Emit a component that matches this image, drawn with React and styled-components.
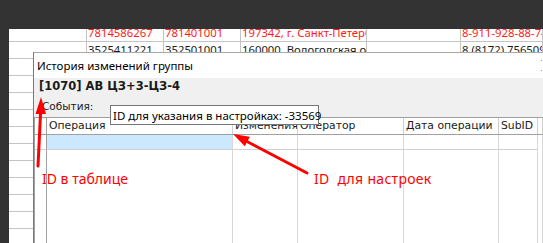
import styled, { createGlobalStyle } from "styled-components";

const GlobalStyle = createGlobalStyle`
  html, body {
    margin: 0;
    padding: 0;
    background: #333333;
  }
`;

const Screen = styled.div`
  position: relative;
  width: 543px;
  height: 243px;
  overflow: hidden;
  background: #333333;
  display: flex;
  flex-direction: column;
`;

const TopBand = styled.div`
  height: 29px;
  flex-shrink: 0;
`;

const SheetArea = styled.div`
  flex: 1;
  display: flex;
  padding-left: 9px;
  overflow: hidden;
`;

const Sheet = styled.div`
  flex: 1;
  background: #ffffff;
  overflow: hidden;
`;

const SheetRows = styled.div`
  margin-top: -4px;
  display: flex;
  flex-direction: column;
`;

const SheetRow = styled.div`
  display: grid;
  grid-template-columns: 78px 77px 77px 126px 94px 1fr;
  height: 16px;
  border-bottom: 1px solid #c4c4c4;
`;

const SheetCell = styled.div`
  border-right: 1px solid #c4c4c4;
  padding-left: 1px;
  font-family: "Noto Sans", sans-serif;
  font-size: 11.3px;
  line-height: 16px;
  color: ${(p) => (p.$red ? "#ff1a1a" : "#1a1a1a")};
  white-space: nowrap;
  overflow: hidden;
`;

const Dialog = styled.div`
  position: absolute;
  left: 33px;
  top: 52px;
  right: 0;
  bottom: -20px;
  border-left: 1px solid #7a7a7a;
  border-top: 1px solid #a8a8a8;
  display: flex;
  flex-direction: column;
  background: #f0f0f0;
`;

const TitleBar = styled.div`
  height: 25px;
  flex-shrink: 0;
  background: #ffffff;
  display: flex;
  align-items: center;
  justify-content: space-between;
  padding-left: 3px;
  padding-right: 1px;
  font-family: "Noto Sans", sans-serif;
  font-size: 11.5px;
  color: #000000;
`;

const ControlMark = styled.span`
  width: 1px;
  height: 9px;
  border-top: 1px solid #a0a0a0;
  border-bottom: 1px solid #a0a0a0;
`;

const Body = styled.div`
  flex: 1;
  display: flex;
  flex-direction: column;
  padding-top: 1px;
`;

const GroupName = styled.div`
  padding-left: 5px;
  font-family: "DejaVu Sans", sans-serif;
  font-weight: bold;
  font-size: 11.5px;
  line-height: 15px;
  color: #1a1a1a;
`;

const SectionLabel = styled.div`
  margin-top: 5px;
  padding-left: 8px;
  font-family: "DejaVu Sans", sans-serif;
  font-size: 10.5px;
  line-height: 14px;
  color: #1a1a1a;
`;

const Grid = styled.div`
  margin-top: 4px;
  flex: 1;
  background: #ffffff;
  border-left: 1px solid #a0a0a0;
  border-top: 1px solid #a0a0a0;
  display: flex;
  flex-direction: column;
`;

const GridRow = styled.div`
  display: grid;
  grid-template-columns: 12px 186px 65px 106px 95px 39px 1fr;
  height: ${(p) => p.$height};
  flex: ${(p) => (p.$fill ? 1 : "none")};
  border-bottom: ${(p) => p.$line};
`;

const HeadCell = styled.div`
  border-right: 1px solid ${(p) => (p.$rowHead ? "#a0a0a0" : "#d0d0d0")};
  padding-left: 2px;
  font-family: "DejaVu Sans", sans-serif;
  font-size: 10.8px;
  line-height: 16px;
  color: #1a1a1a;
  white-space: nowrap;
  overflow: hidden;
`;

const Cell = styled.div`
  border-right: 1px solid ${(p) => (p.$rowHead ? "#a0a0a0" : "#d8d8d8")};
  border-bottom: ${(p) => (p.$bottom ? "1px solid #d0d0d0" : "none")};
  background: ${(p) => (p.$selected ? "#cce8ff" : "#ffffff")};
`;

const Tooltip = styled.div`
  position: absolute;
  left: 110px;
  top: 105px;
  width: 205px;
  height: 18px;
  background: #ffffff;
  border: 1px solid #767676;
  padding-left: 2px;
  font-family: "Noto Sans", sans-serif;
  font-size: 11.5px;
  line-height: 19px;
  color: #000000;
  white-space: nowrap;
`;

const Arrows = styled.svg`
  position: absolute;
  left: 0;
  top: 0;
  pointer-events: none;
`;

const Note = styled.div`
  position: absolute;
  left: ${(p) => p.$x}px;
  top: ${(p) => p.$y}px;
  font-family: "Noto Sans", sans-serif;
  font-size: 14px;
  line-height: 18px;
  letter-spacing: ${(p) => p.$spacing || "0"};
  color: #ff0000;
  white-space: pre;
`;

const sheetData = [
  {
    red: true,
    cells: ["", "7814586267", "781401001", "197342, г. Санкт-Петербург", "", "8-911-928-88-74"],
  },
  {
    red: false,
    cells: ["", "3525411221", "352501001", "160000, Вологодская область", "", "8 (8172) 756509"],
  },
];

const columns = ["", "Операция", "Изменения", "Оператор", "Дата операции", "SubID", ""];

function App() {
  const blank = Array.from({ length: 12 }, () => ({ red: false, cells: ["", "", "", "", "", ""] }));
  const rows = [...sheetData, ...blank];

  return (
    <>
      <GlobalStyle />
      <Screen>
        <TopBand />
        <SheetArea>
          <Sheet>
            <SheetRows>
              {rows.map((r, i) => (
                <SheetRow key={i}>
                  {r.cells.map((c, j) => (
                    <SheetCell key={j} $red={r.red}>
                      {c}
                    </SheetCell>
                  ))}
                </SheetRow>
              ))}
            </SheetRows>
          </Sheet>
        </SheetArea>

        <Dialog>
          <TitleBar>
            <span>История изменений группы</span>
            <ControlMark />
          </TitleBar>
          <Body>
            <GroupName>[1070] АВ ЦЗ+3-ЦЗ-4</GroupName>
            <SectionLabel>События:</SectionLabel>
            <Grid>
              <GridRow $height="16px" $line="1px solid #a0a0a0">
                {columns.map((c, i) => (
                  <HeadCell key={i} $rowHead={i === 0}>
                    {c}
                  </HeadCell>
                ))}
              </GridRow>
              <GridRow $height="15px" $line="none">
                {columns.map((c, i) => (
                  <Cell key={i} $rowHead={i === 0} $selected={i === 1} $bottom={i < 6} />
                ))}
              </GridRow>
              <GridRow $fill $line="none">
                {columns.map((c, i) => (
                  <Cell key={i} $rowHead={i === 0} $bottom={false} />
                ))}
              </GridRow>
            </Grid>
          </Body>
        </Dialog>

        <Tooltip>ID для указания в настройках: -33569</Tooltip>

        <Arrows width="543" height="243" viewBox="0 0 543 243">
          <line x1="38" y1="166" x2="40.6" y2="112" stroke="#ff0000" strokeWidth="3" strokeLinecap="round" />
          <polygon points="41,97 35.5,114 46,114" fill="#ff0000" />
          <line x1="307" y1="173" x2="246" y2="141" stroke="#ff0000" strokeWidth="3" strokeLinecap="round" />
          <polygon points="233,134 249.8,136.8 244.8,146.2" fill="#ff0000" />
        </Arrows>

        <Note $x={42} $y={170}>ID в таблице</Note>
        <Note $x={314} $y={170} $spacing="0.3px">ID  для настроек</Note>
      </Screen>
    </>
  );
}

export default App;
